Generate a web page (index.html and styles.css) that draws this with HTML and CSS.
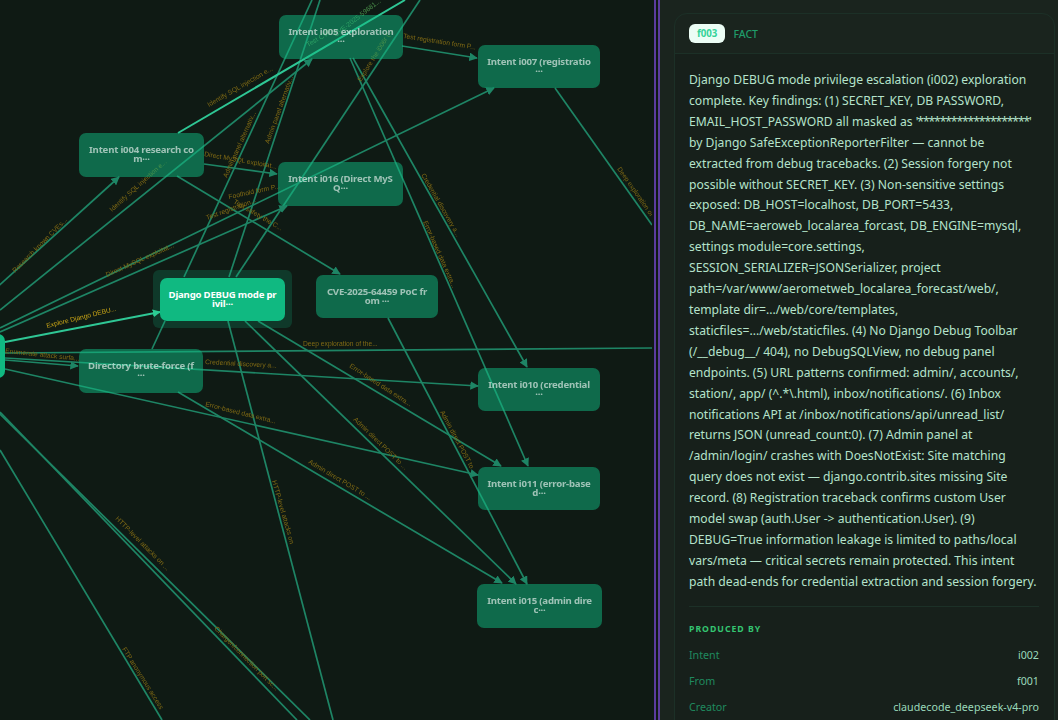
FILE: index.html
```html
<!DOCTYPE html>
<html lang="en">
<head>
  <meta charset="UTF-8">
  <title>Fact f003</title>
  <meta name="viewport" content="width=device-width, initial-scale=1.0">
  <link rel="stylesheet" href="styles.css">
</head>

<body>
  <div class="layout">
    <div class="graph">
      <svg class="edges" width="652" height="720" viewBox="0 0 652 720">
        <defs>
          <marker id="arrow" viewBox="0 0 10 10" refX="9" refY="5" markerWidth="5" markerHeight="5" orient="auto">
            <path d="M0 0L10 5L0 10z" fill="#1e8565"></path>
          </marker>
          <marker id="arrow-hi" viewBox="0 0 10 10" refX="9" refY="5" markerWidth="4" markerHeight="4" orient="auto">
            <path d="M0 0L10 5L0 10z" fill="#34d399"></path>
          </marker>
        </defs>

        <g class="edge">
          <path d="M-60 339L119 177" marker-end="url(#arrow)"></path>
          <path d="M0 310L312 59" marker-end="url(#arrow)"></path>
          <path d="M184 277L312 0"></path>
          <path d="M229 277L320 0"></path>
          <path d="M236 277L420 0"></path>
          <path d="M204 164L277 174" marker-end="url(#arrow)"></path>
          <path d="M0 328L494 88" marker-end="url(#arrow)"></path>
          <path d="M0 332L287 206" marker-end="url(#arrow)"></path>
          <path d="M177 176L340 274" marker-end="url(#arrow)"></path>
          <path d="M5 360L78 366" marker-end="url(#arrow)"></path>
          <path d="M5 353L652 348"></path>
          <path d="M5 358L478 386" marker-end="url(#arrow)"></path>
          <path d="M5 369L478 475" marker-end="url(#arrow)"></path>
          <path d="M178 392L502 583" marker-end="url(#arrow)"></path>
          <path d="M258 321L501 466" marker-end="url(#arrow)"></path>
          <path d="M245 321L516 584" marker-end="url(#arrow)"></path>
          <path d="M228 321L333 720"></path>
          <path d="M0 412L297 720"></path>
          <path d="M0 414L310 720"></path>
          <path d="M0 450L162 720"></path>
          <path d="M402 46L477 58" marker-end="url(#arrow)"></path>
          <path d="M350 58L528 466" marker-end="url(#arrow)"></path>
          <path d="M353 58L527 367" marker-end="url(#arrow)"></path>
          <path d="M555 88L652 225"></path>
          <path d="M388 318L527 584" marker-end="url(#arrow)"></path>
          <path d="M152 349L165 321"></path>
        </g>
        <g class="edge edge-hi">
          <path d="M178 133L405 0"></path>
          <path d="M5 342L160 312" marker-end="url(#arrow-hi)"></path>
        </g>

        <g class="edge-label">
          <text transform="translate(15 273) rotate(-45)">Research known CVEs...</text>
          <text transform="translate(112 212) rotate(-42)">Identify SQL injection e...</text>
          <text transform="translate(209 107) rotate(-30)">Identify SQL injection e...</text>
          <text transform="translate(227 178) rotate(-66)">Admin panel alternativ...</text>
          <text transform="translate(269 144) rotate(-70)">Admin panel alternativ...</text>
          <text transform="translate(204 156) rotate(10)">Direct MySQL exploitat...</text>
          <text transform="translate(107 277) rotate(-24)">Direct MySQL exploitat...</text>
          <text transform="translate(229 199) rotate(-12)">Foothold form P...</text>
          <text transform="translate(207 220) rotate(-20)">Test registration...</text>
          <text transform="translate(233 203) rotate(30)">Test safety the C...</text>
          <text transform="translate(47 328) rotate(-14)" class="label-hi">Explore Django DEBU...</text>
          <text transform="translate(5 353) rotate(6)">Enumerate attack surfa...</text>
          <text transform="translate(303 346)">Deep exploration of the...</text>
          <text transform="translate(205 364) rotate(3)">Credential discovery a...</text>
          <text transform="translate(205 406) rotate(14)">Error-based data extra...</text>
          <text transform="translate(308 463) rotate(31)">Admin direct POST to ...</text>
          <text transform="translate(349 367) rotate(33)">Error-based data extra...</text>
          <text transform="translate(353 420) rotate(44)">Admin direct POST to ...</text>
          <text transform="translate(440 412) rotate(62)">Admin direct POST to</text>
          <text transform="translate(272 481) rotate(74)">HTTP-level attacks on</text>
          <text transform="translate(115 519) rotate(45)">HTTP-level attacks on ...</text>
          <text transform="translate(214 629) rotate(45)">Chargen/connection port sc...</text>
          <text transform="translate(122 649) rotate(58)">FTP anonymous access</text>
          <text transform="translate(403 38) rotate(9)">Test registration form P...</text>
          <text transform="translate(421 175) rotate(60)">Credential discovery a...</text>
          <text transform="translate(423 222) rotate(66)">Error-based data extra...</text>
          <text transform="translate(617 169) rotate(55)">Deep exploration of</text>
          <text transform="translate(361 82) rotate(-58)">Explore the i006r ('...</text>
          <text transform="translate(336 37) rotate(-38)" class="label-green">CVE-2025-59681...</text>
          <text transform="translate(308 47) rotate(-30)" class="label-green">Test CVE-...</text>
        </g>
      </svg>

      <div class="halo"></div>
      <div class="node node-root"></div>
      <div class="node node-i005">Intent i005 exploration<br>···</div>
      <div class="node node-i007">Intent i007 (registratio<br>···</div>
      <div class="node node-i004">Intent i004 research co<br>m···</div>
      <div class="node node-i016">Intent i016 (Direct MyS<br>Q···</div>
      <div class="node node-active">Django DEBUG mode pr<br>ivil···</div>
      <div class="node node-cve">CVE-2025-64459 PoC fr<br>om ···</div>
      <div class="node node-dir">Directory brute-force (f<br>···</div>
      <div class="node node-i010">Intent i010 (credential<br>···</div>
      <div class="node node-i011">Intent i011 (error-base<br>d···</div>
      <div class="node node-i015">Intent i015 (admin dire<br>c···</div>
    </div>

    <div class="divider"></div>

    <aside class="panel">
      <div class="card">
        <div class="card-head">
          <span class="fact-id">f003</span>
          <span class="fact-type">FACT</span>
        </div>
        <div class="card-body">
          <p class="fact-text">Django DEBUG mode privilege escalation (i002) exploration complete. Key findings: (1) SECRET_KEY, DB PASSWORD, EMAIL_HOST_PASSWORD all masked as <span class="mask">'********************'</span> by Django SafeExceptionReporterFilter — cannot be extracted from debug tracebacks. (2) Session forgery not possible without SECRET_KEY. (3) Non-sensitive settings exposed: DB_HOST=localhost, DB_PORT=5433, DB_NAME=aeroweb_localarea_forcast, DB_ENGINE=mysql, settings module=core.settings, SESSION_SERIALIZER=JSONSerializer, project path=/var/www/aerometweb_localarea_forecast/web/, template dir=.../web/core/templates, staticfiles=.../web/staticfiles. (4) No Django Debug Toolbar (/__debug__/ 404), no DebugSQLView, no debug panel endpoints. (5) URL patterns confirmed: admin/, accounts/, station/, app/ (^.*\.html), inbox/notifications/. (6) Inbox notifications API at /inbox/notifications/api/unread_list/ returns JSON (unread_count:0). (7) Admin panel at /admin/login/ crashes with DoesNotExist: Site matching query does not exist — django.contrib.sites missing Site record. (8) Registration traceback confirms custom User model swap (auth.User -&gt; authentication.User). (9) DEBUG=True information leakage is limited to paths/local vars/meta — critical secrets remain protected. This intent path dead-ends for credential extraction and session forgery.</p>

          <div class="section">
            <h3>PRODUCED BY</h3>
            <div class="row"><span>Intent</span><b>i002</b></div>
            <div class="row"><span>From</span><b>f001</b></div>
            <div class="row"><span>Creator</span><b>claudecode_deepseek-v4-pro</b></div>
          </div>
        </div>
      </div>
    </aside>
  </div>
</body>
</html>
```
FILE: styles.css
```css
html, body {
  margin: 0;
  height: 100%;
  overflow: hidden;
}

body {
  font-family: 'Noto Sans', sans-serif;
  background-color: #0f1a14;
}

.layout {
  display: flex;
  height: 720px;
  width: 1058px;
  overflow: hidden;
}

/* graph canvas */
.graph {
  position: relative;
  flex: 0 0 654px;
  height: 720px;
  overflow: hidden;
  filter: blur(0.35px);
}

.edges {
  position: absolute;
  left: 0;
  top: 0;
}

.edge path {
  fill: none;
  stroke: #1e8565;
  stroke-width: 1.7;
}

.edge-hi path {
  stroke: #2fc795;
  stroke-width: 2;
}

.edge-label text {
  font-family: 'Liberation Sans', sans-serif;
  font-size: 6.7px;
  fill: #806a14;
}

.edge-label .label-hi {
  fill: #c9a516;
}

.edge-label .label-green {
  fill: #4a8f4a;
}

.halo {
  position: absolute;
  left: 153px;
  top: 270px;
  width: 139px;
  height: 58px;
  border-radius: 6px;
  background-color: rgba(16, 185, 129, 0.2);
}

.node {
  position: absolute;
  box-sizing: border-box;
  width: 124px;
  height: 43.5px;
  padding-top: 12px;
  border-radius: 7px;
  background-color: rgba(16, 185, 129, 0.5);
  color: rgba(255, 255, 255, 0.6);
  font-size: 9.6px;
  font-weight: 700;
  letter-spacing: -0.2px;
  line-height: 9px;
  text-align: center;
  white-space: nowrap;
}

.node-root {
  left: -120px;
  top: 334px;
  width: 125px;
  background-color: #10b981;
}

.node-active {
  left: 160px;
  top: 277.5px;
  width: 125px;
  background-color: #10b981;
  color: #ffffff;
}

.node-i005 { left: 279px; top: 15px; }
.node-i007 { left: 478px; top: 44.5px; width: 122px; }
.node-i004 { left: 79px; top: 133px; width: 125px; }
.node-i016 { left: 278px; top: 162px; width: 125px; }
.node-cve { left: 316px; top: 274.5px; width: 122px; }
.node-dir { left: 79px; top: 349px; }
.node-i010 { left: 478px; top: 367.5px; width: 122px; }
.node-i011 { left: 478px; top: 466.5px; width: 122px; }
.node-i015 { left: 477px; top: 584px; width: 125px; }

.divider {
  flex: 0 0 6px;
  box-sizing: border-box;
  border-left: 2px solid #5b3c9e;
  border-right: 2px solid #5b3c9e;
}

/* right panel */
.panel {
  flex: 1;
  min-width: 0;
  padding: 13px 0 0 14px;
  background-color: #1a241e;
  box-sizing: border-box;
}

.card {
  box-sizing: border-box;
  width: 381px;
  border: 1px solid #1c3027;
  border-radius: 13px 13px 0 0;
}

.card-head {
  display: flex;
  align-items: center;
  gap: 8px;
  height: 39px;
  padding-left: 14px;
  border-bottom: 1px solid #1c3027;
}

.fact-id {
  padding: 2px 8px;
  border-radius: 6px;
  background-color: #ecfdf5;
  color: #34d399;
  font-size: 9.7px;
  font-weight: 700;
  line-height: 15px;
}

.fact-type {
  color: #1f9d6a;
  font-size: 10.5px;
  font-weight: 500;
}

.card-body {
  padding: 16px 15px 0 14px;
  background-color: #17201b;
}

.fact-text {
  margin: 0;
  color: #b5e3cb;
  font-size: 12.15px;
  line-height: 20.9px;
}

.mask {
  letter-spacing: -1.1px;
}

.section {
  margin-top: 13.5px;
  padding-top: 15px;
  border-top: 1px solid #1c3027;
}

.section h3 {
  margin: 0 0 10px;
  color: #34c571;
  font-size: 8.7px;
  font-weight: 700;
  letter-spacing: 1px;
  line-height: 14px;
}

.row {
  display: flex;
  justify-content: space-between;
  height: 26px;
  line-height: 18px;
  font-size: 10.7px;
}

.row span {
  color: #1f8a5f;
}

.row b {
  color: #9ad9ba;
  font-weight: 400;
}
```
